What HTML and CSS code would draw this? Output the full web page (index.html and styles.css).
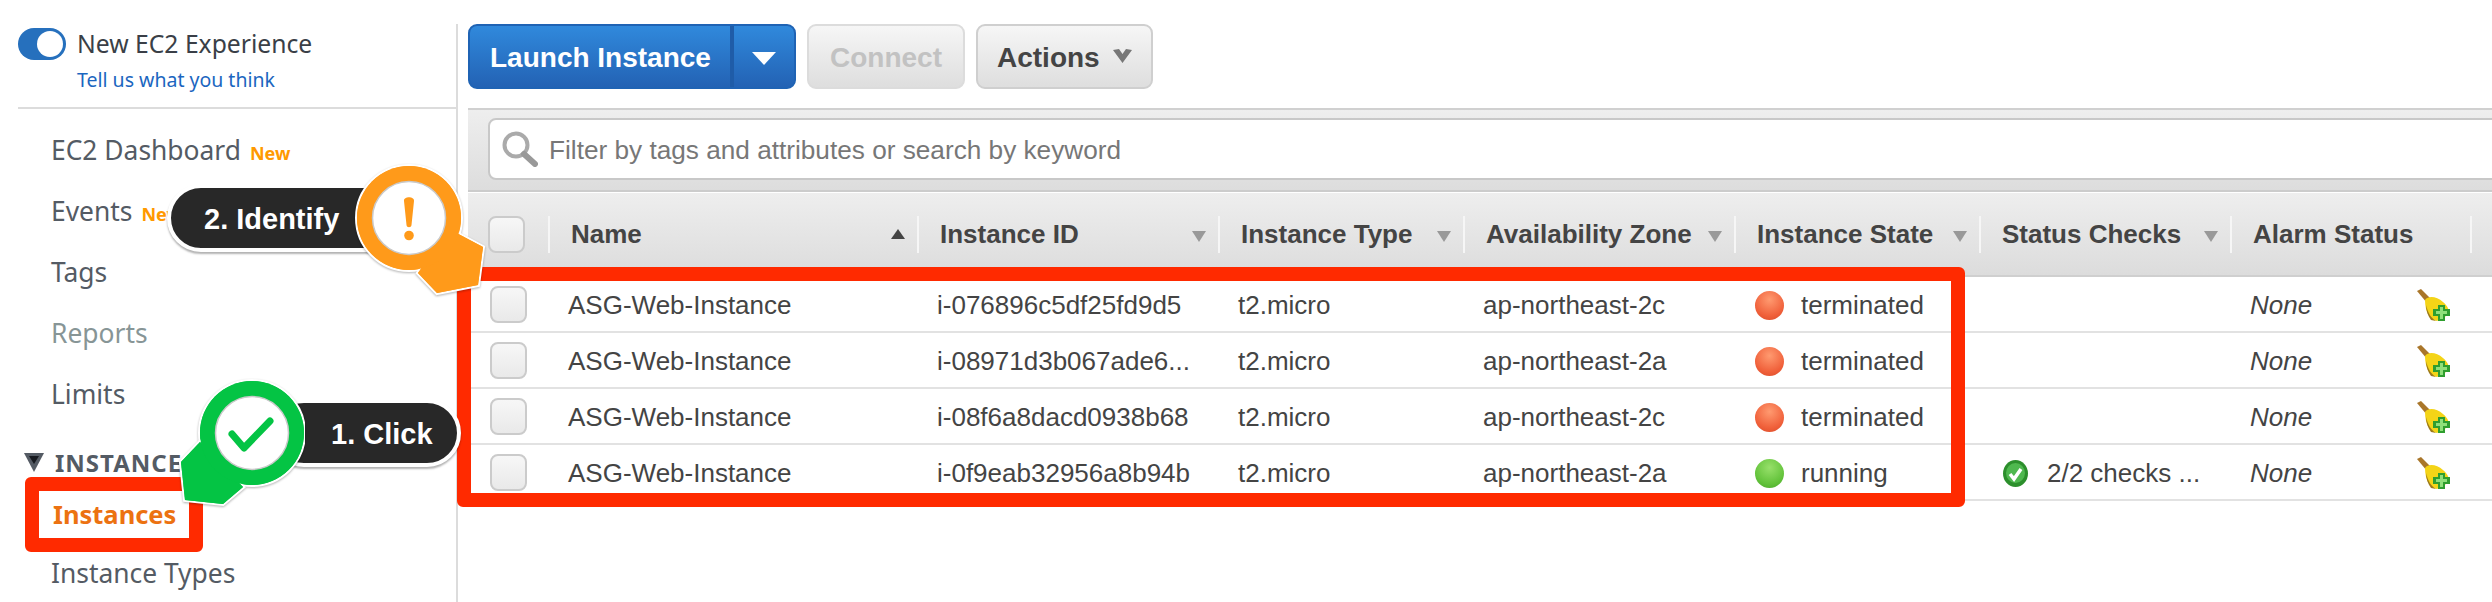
FILE: index.html
```html
<!DOCTYPE html>
<html lang="en">
<head>
    <meta charset="UTF-8">
    <meta name="viewport" content="width=device-width, initial-scale=1.0">
    <title>EC2 Instances</title>
    <link rel="stylesheet" href="styles.css">
</head>
<body>
    <div class="page">
        <aside class="sidebar">
            <div class="experience">
                <div class="experience-row">
                    <span class="toggle"><span class="toggle-knob"></span></span>
                    <span class="experience-title">New EC2 Experience</span>
                </div>
                <a class="experience-link">Tell us what you think</a>
            </div>
            <ul class="menu">
                <li>EC2 Dashboard<span class="new">New</span></li>
                <li>Events<span class="new">New</span></li>
                <li>Tags</li>
                <li class="muted">Reports</li>
                <li>Limits</li>
                <li class="menu-section">
                    <svg class="section-arrow" width="20" height="19" viewBox="0 0 20 19"><path d="M0 0H20L10 19Z" fill="#545b64"/><path d="M5 3H15L10 11Z" fill="#16191f"/></svg>
                    INSTANCES
                </li>
                <li class="active">Instances</li>
                <li>Instance Types</li>
            </ul>
        </aside>

        <main class="content">
            <div class="toolbar">
                <div class="btn btn-launch">
                    <span class="btn-launch-label">Launch Instance</span>
                    <span class="btn-launch-caret"><span class="caret-white"></span></span>
                </div>
                <div class="btn btn-connect">Connect</div>
                <div class="btn btn-actions">
                    Actions
                    <svg width="19" height="14" viewBox="0 0 19 14"><path d="M0 1L6 0L9.500 5L13 0L19 1L9.500 14Z" fill="#777"/></svg>
                </div>
            </div>

            <div class="filter-bar">
                <div class="filter-input">
                    <svg class="search-icon" width="36" height="36" viewBox="0 0 36 36">
                        <circle cx="14" cy="14" r="11.500" fill="#fff" stroke="#aaa" stroke-width="4"/>
                        <path d="M22 23L33 33" stroke="#999" stroke-width="6" stroke-linecap="round"/>
                    </svg>
                    <span>Filter by tags and attributes or search by keyword</span>
                </div>
            </div>

            <div class="table">
                <div class="table-head">
                    <div class="head-check"><span class="checkbox"></span></div>
                    <div class="head-cell">Name <span class="sort-up"></span></div>
                    <div class="head-cell">Instance ID <span class="sort-down"></span></div>
                    <div class="head-cell">Instance Type <span class="sort-down"></span></div>
                    <div class="head-cell">Availability Zone <span class="sort-down"></span></div>
                    <div class="head-cell">Instance State <span class="sort-down"></span></div>
                    <div class="head-cell">Status Checks <span class="sort-down"></span></div>
                    <div class="head-cell">Alarm Status</div>
                    <div class="head-cell"></div>
                </div>

                <div class="table-row">
                    <div class="cell-check"><span class="checkbox"></span></div>
                    <div class="cell">ASG-Web-Instance</div>
                    <div class="cell">i-076896c5df25fd9d5</div>
                    <div class="cell">t2.micro</div>
                    <div class="cell">ap-northeast-2c</div>
                    <div class="cell state"><span class="dot dot-red"></span>terminated</div>
                    <div class="cell"></div>
                    <div class="cell alarm"><em>None</em><svg class="broom" width="33" height="32" viewBox="0 0 33 32"><use href="#broom-icon"/></svg></div>
                </div>
                <div class="table-row">
                    <div class="cell-check"><span class="checkbox"></span></div>
                    <div class="cell">ASG-Web-Instance</div>
                    <div class="cell">i-08971d3b067ade6...</div>
                    <div class="cell">t2.micro</div>
                    <div class="cell">ap-northeast-2a</div>
                    <div class="cell state"><span class="dot dot-red"></span>terminated</div>
                    <div class="cell"></div>
                    <div class="cell alarm"><em>None</em><svg class="broom" width="33" height="32" viewBox="0 0 33 32"><use href="#broom-icon"/></svg></div>
                </div>
                <div class="table-row">
                    <div class="cell-check"><span class="checkbox"></span></div>
                    <div class="cell">ASG-Web-Instance</div>
                    <div class="cell">i-08f6a8dacd0938b68</div>
                    <div class="cell">t2.micro</div>
                    <div class="cell">ap-northeast-2c</div>
                    <div class="cell state"><span class="dot dot-red"></span>terminated</div>
                    <div class="cell"></div>
                    <div class="cell alarm"><em>None</em><svg class="broom" width="33" height="32" viewBox="0 0 33 32"><use href="#broom-icon"/></svg></div>
                </div>
                <div class="table-row">
                    <div class="cell-check"><span class="checkbox"></span></div>
                    <div class="cell">ASG-Web-Instance</div>
                    <div class="cell">i-0f9eab32956a8b94b</div>
                    <div class="cell">t2.micro</div>
                    <div class="cell">ap-northeast-2a</div>
                    <div class="cell state"><span class="dot dot-green"></span>running</div>
                    <div class="cell status">
                        <svg width="25" height="27" viewBox="0 0 25 27">
                            <ellipse cx="12.500" cy="13.500" rx="12.500" ry="13.500" fill="#2c8f2c"/>
                            <ellipse cx="12.500" cy="13" rx="9.500" ry="10" fill="#4fb84f"/>
                            <path d="M7 14L11 19L18 9" fill="none" stroke="#fff" stroke-width="3.500"/>
                        </svg>
                        2/2 checks ...
                    </div>
                    <div class="cell alarm"><em>None</em><svg class="broom" width="33" height="32" viewBox="0 0 33 32"><use href="#broom-icon"/></svg></div>
                </div>
            </div>
        </main>
    </div>

    <svg class="defs" width="0" height="0">
        <defs>
            <g id="broom-icon">
                <path d="M0 2L4 0L14 10L10 14Z" fill="#a9762a"/>
                <path d="M8 11C12 6 20 8 26 13C31 17 33 22 31 26L20 32C13 31 8 23 8 11Z" fill="#f4d417"/>
                <path d="M9 16C11 24 14 29 19 32L14 31C11 27 9 22 9 16Z" fill="#9c7a1c"/>
                <path d="M21 16H28V20H33V27H28V32H21V27H16V20H21Z" fill="#2f9e2f"/>
                <path d="M23 18H26V22H30V25H26V30H23V25H19V22H23Z" fill="#8fe07a"/>
            </g>
        </defs>
    </svg>

    <div class="frame frame-menu"></div>
    <div class="frame frame-table"></div>

    <div class="pill pill-identify">2. Identify</div>
    <svg class="lens lens-identify" width="140" height="140" viewBox="0 0 140 140">
        <g fill="#ff9a1a" stroke="#fff" stroke-width="4" paint-order="stroke">
            <circle cx="60" cy="55" r="52"/>
            <path d="M100 66L134 84L129 122L88 130L69 110Z"/>
        </g>
        <path d="M100 66L134 84L129 122L88 130L69 110Z" fill="#ff9a1a"/>
        <circle cx="60" cy="55" r="52" fill="#ff9a1a"/>
        <circle cx="60" cy="55" r="36.500" fill="#fff" stroke="#c9c9c9" stroke-width="1.500"/>
        <path d="M55 38C54.500 33 65.500 33 65 38L62.500 62C62.300 65 57.700 65 57.500 62Z" fill="#ff9a1a"/>
        <circle cx="60" cy="72.500" r="4.800" fill="#ff9a1a"/>
    </svg>

    <div class="pill pill-click">1. Click</div>
    <svg class="lens lens-click" width="140" height="140" viewBox="0 0 140 140">
        <g fill="#04c444" stroke="#fff" stroke-width="4" paint-order="stroke">
            <circle cx="87" cy="55" r="52"/>
            <path d="M35 64L16 84L20 122L58 126L78 109Z"/>
        </g>
        <path d="M35 64L16 84L20 122L58 126L78 109Z" fill="#04c444"/>
        <circle cx="87" cy="55" r="52" fill="#04c444"/>
        <circle cx="87" cy="55" r="36.500" fill="#fff" stroke="#c9c9c9" stroke-width="1.500"/>
        <path d="M67 56L79 70L105 43" fill="none" stroke="#04c444" stroke-width="7" stroke-linecap="round" stroke-linejoin="round"/>
    </svg>
</body>
</html>
```

FILE: styles.css
```css
* {
    margin: 0;
    padding: 0;
    box-sizing: border-box;
}
html, body {
    height: 100%;
    overflow: hidden;
}
body {
    font-family: "Liberation Sans", Arial, sans-serif;
    background-color: #fff;
    color: #444;
    position: relative;
}
ul {
    list-style: none;
}
.defs {
    position: absolute;
}
.page {
    display: flex;
    height: 602px;
}

/* sidebar */
.sidebar {
    width: 458px;
    flex: none;
    margin-top: 24px;
    border-right: 2px solid #dcdcdc;
    font-family: "Noto Sans", sans-serif;
}
.experience {
    margin-left: 18px;
    height: 85px;
    border-bottom: 2px solid #dcdcdc;
    padding-top: 4px;
}
.experience-row {
    display: flex;
    align-items: center;
    gap: 11px;
}
.toggle {
    width: 48px;
    height: 32px;
    border-radius: 16px;
    background-color: #2670bd;
    display: flex;
    align-items: center;
    justify-content: flex-end;
    padding-right: 3px;
}
.toggle-knob {
    width: 26px;
    height: 26px;
    border-radius: 50%;
    background-color: #fff;
}
.experience-title {
    font-size: 24.700px;
    line-height: 32px;
    color: #3a3f47;
}
.experience-link {
    display: block;
    margin: 7px 0 0 59px;
    font-size: 19.500px;
    line-height: 26px;
    color: #1b66c0;
}
.menu {
    padding: 10px 0 0 51px;
    font-size: 26.400px;
    color: #545b64;
}
.menu li {
    height: 61px;
    display: flex;
    align-items: center;
    white-space: nowrap;
}
.new {
    font-size: 18px;
    font-weight: 700;
    color: #ff9900;
    margin: 6px 0 0 9px;
}
.menu .muted {
    color: #879596;
}
.menu .menu-section {
    height: 53px;
    margin: 12px 0 0 -27px;
    font-weight: 700;
    font-size: 24px;
    letter-spacing: 1px;
    gap: 11px;
}
.menu .active {
    height: 53px;
    font-size: 25.500px;
    padding: 0 0 3px 2px;
    font-weight: 700;
    color: #ec7211;
}

/* toolbar */
.content {
    flex: 1;
    min-width: 0;
    padding: 24px 0 0 10px;
}
.toolbar {
    display: flex;
    gap: 11px;
    height: 86px;
    border-bottom: 2px solid #d0d0d0;
}
.btn {
    height: 65px;
    border-radius: 9px;
    border: 2px solid #cfcfcf;
    font-size: 28px;
    font-weight: 700;
    display: flex;
    align-items: center;
    padding-top: 3px;
    background: linear-gradient(#f6f6f6, #dedede);
}
.btn-launch {
    width: 328px;
    padding-top: 0;
    border-color: #1f63b4;
    background: linear-gradient(#3089dc, #2362b4);
    color: #fff;
}
.btn-launch-label {
    width: 264px;
    height: 100%;
    line-height: 64px;
    padding-left: 20px;
    border-right: 4px solid #1f5ca8;
}
.btn-launch-caret {
    flex: 1;
    display: flex;
    justify-content: center;
}
.caret-white {
    border-left: 12px solid transparent;
    border-right: 12px solid transparent;
    border-top: 13px solid #fff;
    margin-top: 3px;
}
.btn-connect {
    width: 158px;
    padding-left: 21px;
    color: #c2c2c2;
    border-color: #dcdcdc;
}
.btn-actions {
    width: 177px;
    padding-left: 19px;
    gap: 13px;
    color: #444;
}
.btn-actions svg {
    margin-top: -5px;
}

/* filter */
.filter-bar {
    height: 82px;
    padding: 8px 0 0 20px;
    background: linear-gradient(#eeeeee, #dddddd);
    border-bottom: 2px solid #cccccc;
}
.filter-input {
    height: 62px;
    margin-right: -20px;
    background-color: #fff;
    border: 2px solid #c8c8c8;
    border-radius: 8px;
    display: flex;
    align-items: center;
    gap: 11px;
    padding: 2px 0 0 12px;
    font-size: 26.200px;
    color: #777;
}
.search-icon {
    flex: none;
    margin-top: -2px;
}

/* table */
.table-head, .table-row {
    display: grid;
    grid-template-columns: 80px 369px 301px 245px 271px 245px 251px 240px 22px;
    align-items: center;
}
.table-head {
    margin-top: 1px;
    height: 84px;
    background: linear-gradient(#eeeeee, #dcdcdc);
    border-bottom: 2px solid #cfcfcf;
    font-size: 26px;
    font-weight: 700;
}
.head-check, .cell-check {
    padding-left: 20px;
    display: flex;
}
.checkbox {
    width: 37px;
    height: 37px;
    border: 2px solid #cbcbcb;
    border-radius: 8px;
    background: linear-gradient(#f7f7f7, #e9e9e9);
}
.cell-check .checkbox {
    margin-left: 2px;
}
.head-cell {
    height: 37px;
    border-left: 2px solid #f6f6f6;
    padding: 0 12px 0 21px;
    display: flex;
    align-items: center;
    justify-content: space-between;
    white-space: nowrap;
}
.sort-up, .sort-down {
    border-left: 7px solid transparent;
    border-right: 7px solid transparent;
}
.sort-up {
    border-bottom: 10px solid #444;
}
.sort-down {
    border-top: 11px solid #999;
    margin-top: 4px;
}
.table-row {
    height: 56px;
    border-bottom: 2px solid #e2e2e2;
    font-size: 26px;
}
.cell {
    padding-left: 20px;
    padding-top: 2px;
    white-space: nowrap;
}
.state {
    display: flex;
    align-items: center;
    gap: 17px;
    padding-left: 21px;
}
.dot {
    width: 29px;
    height: 29px;
    border-radius: 50%;
}
.dot-red {
    background: radial-gradient(circle at 50% 30%, #ff9a70, #f0603a 65%, #d84a28);
}
.dot-green {
    background: radial-gradient(circle at 50% 30%, #97e06a, #62c23a 65%, #46a428);
}
.status {
    display: flex;
    align-items: center;
    gap: 19px;
    padding-left: 24px;
}
.alarm {
    display: flex;
    align-items: center;
    justify-content: space-between;
    padding-right: 20px;
}

/* annotations over the page */
.frame {
    position: absolute;
    border: 14px solid #ff2a00;
    border-radius: 6px;
}
.frame-menu {
    left: 25px;
    top: 477px;
    width: 178px;
    height: 75px;
}
.frame-table {
    left: 457px;
    top: 267px;
    width: 1508px;
    height: 240px;
}
.pill {
    position: absolute;
    height: 68px;
    border: 4px solid #fff;
    border-radius: 34px;
    background-color: #282828;
    box-shadow: 0 2px 2px rgba(0, 0, 0, 0.3);
    color: #fff;
    font-weight: 700;
    font-size: 29px;
    line-height: 63px;
    white-space: nowrap;
}
.pill-identify {
    left: 167px;
    top: 184px;
    width: 270px;
    padding-left: 33px;
}
.pill-click {
    left: 270px;
    top: 399px;
    width: 191px;
    padding-left: 57px;
}
.lens {
    position: absolute;
    filter: drop-shadow(0 1px 1px rgba(0, 0, 0, 0.3));
}
.lens-identify {
    left: 349px;
    top: 163px;
}
.lens-click {
    left: 165px;
    top: 378px;
}
```
